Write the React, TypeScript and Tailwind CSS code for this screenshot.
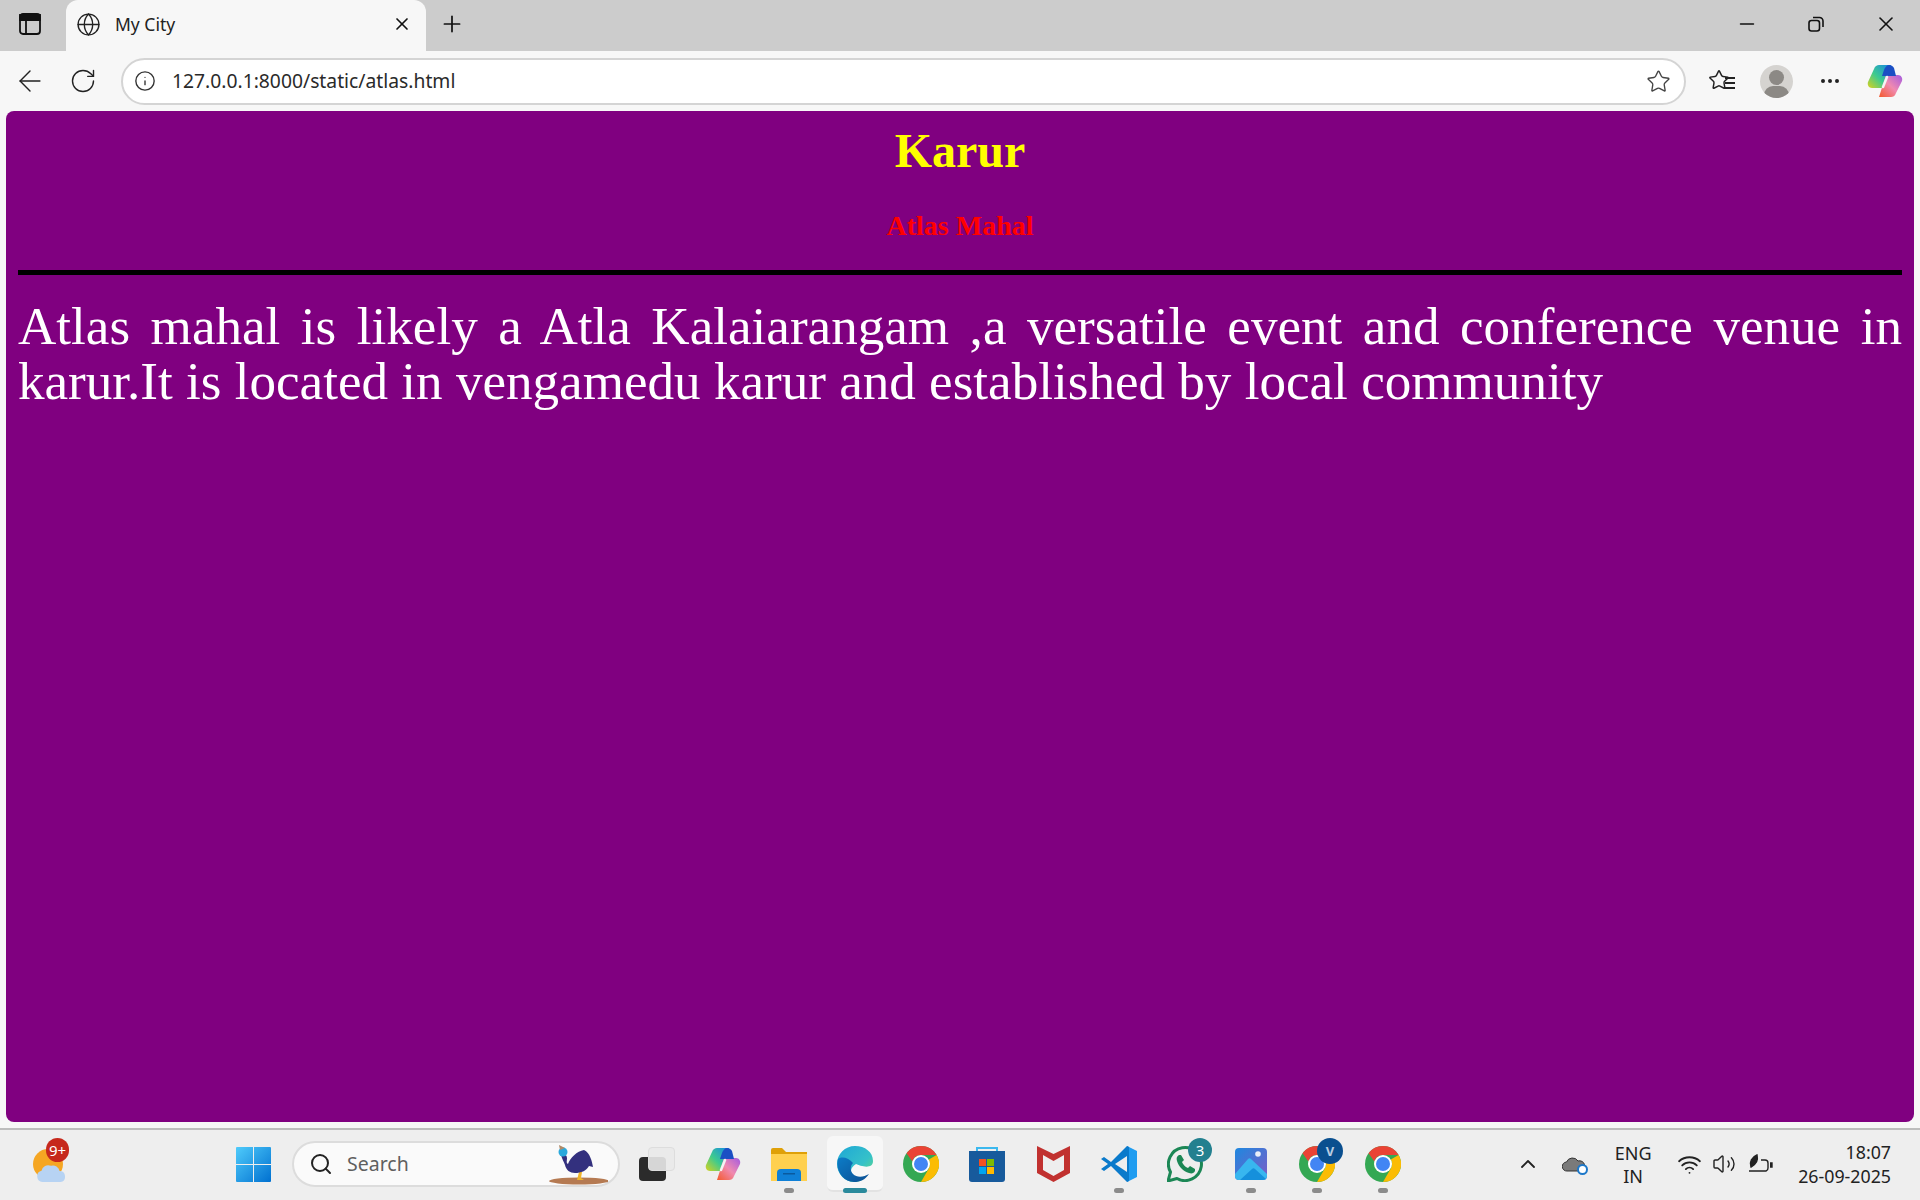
import React from 'react';
import { Globe, X, Plus, ArrowLeft, RotateCw, Info, Star, MoreHorizontal, Minus, ChevronUp, Wifi, Volume2, Search } from 'lucide-react';

const uiFont = "font-['Noto_Sans','Open_Sans',sans-serif]";

function ChromeIcon({ id }: { id: string }) {
  return (
    <svg width="36" height="36" viewBox="0 0 36 36">
      <circle cx="18" cy="18" r="18" fill="#34a853" />
      <path d="M18 0a18 18 0 0 1 15.6 9H18a9 9 0 0 0-8.6 6.4L3.5 7.2A18 18 0 0 1 18 0z" fill="#ea4335" />
      <path d="M33.6 9A18 18 0 0 1 18 36l7.8-13.5A9 9 0 0 0 25.8 13.500z" fill="#fbbc04" />
      <circle cx="18" cy="18" r="9" fill="#fff" />
      <circle id={id} cx="18" cy="18" r="7" fill="#4285f4" />
    </svg>
  );
}

function CopilotIcon({ size, id }: { size: number; id: string }) {
  return (
    <svg width={size} height={size} viewBox="0 0 36 36">
      <defs>
        <linearGradient id={id + 'a'} x1="0" y1="1" x2="1" y2="0">
          <stop offset="0" stopColor="#d8d21e" />
          <stop offset="0.45" stopColor="#3ecb8e" />
          <stop offset="1" stopColor="#1487e6" />
        </linearGradient>
        <linearGradient id={id + 'b'} x1="0" y1="1" x2="1" y2="0">
          <stop offset="0" stopColor="#f4592c" />
          <stop offset="0.5" stopColor="#f08ab0" />
          <stop offset="1" stopColor="#a55be0" />
        </linearGradient>
      </defs>
      <path d="M12 2H24L17 25H5C2 25 0 22 1 19L7 6C8 3 10 2 12 2z" fill={`url(#${id}a)`} />
      <path d="M24 34H12L19 12H31C34 12 36 15 35 18L29 30C28 33 26 34 24 34z" fill={`url(#${id}b)`} />
      <path d="M22 2C20 2 18 4 17 7L15 13H29L27 5C26 3 24 2 22 2z" fill="#1b4fc4" />
      <path d="M20 14L16 24" stroke="#f4f4f4" strokeWidth="2.500" strokeLinecap="round" />
    </svg>
  );
}

function EdgeIcon() {
  return (
    <svg width="36" height="36" viewBox="0 0 36 36">
      <defs>
        <linearGradient id="edge1" x1="0" y1="0" x2="1" y2="1">
          <stop offset="0" stopColor="#1ea7d6" />
          <stop offset="0.6" stopColor="#35c1c9" />
          <stop offset="1" stopColor="#6ee06a" />
        </linearGradient>
        <linearGradient id="edge2" x1="0" y1="0" x2="1" y2="1">
          <stop offset="0" stopColor="#0c7cc7" />
          <stop offset="1" stopColor="#0c4f93" />
        </linearGradient>
      </defs>
      <path d="M18 0C8 0 0 8 0 18c0 10 8 18 17 18 4 0 6-1 8-2-6 1-11-3-11-9 0-3 2-5 5-7 4 2 17 6 17-3C36 6 28 0 18 0z" fill="url(#edge1)" />
      <path d="M1 13C-2 24 6 36 17 36c6 0 11-2 15-8-5 3-12 4-16 0-3-3-3-8 0-11-4-5-11-7-15-4z" fill="url(#edge2)" />
    </svg>
  );
}

function FolderIcon() {
  return (
    <svg width="36" height="33" viewBox="0 0 36 33">
      <path d="M0 2a2 2 0 0 1 2-2h9l4 4h21v6H0z" fill="#dfa008" />
      <path d="M0 6h36v27H0z" fill="#ffd04f" />
      <rect x="6" y="22" width="24" height="11" rx="0" fill="#ffc532" />
      <path d="M6 33V25a4 4 0 0 1 4-4h16a4 4 0 0 1 4 4v8z" fill="#0f80d7" />
      <rect x="12" y="25" width="12" height="1.500" fill="#0a5a9e" />
    </svg>
  );
}

function StoreIcon() {
  return (
    <svg width="36" height="36" viewBox="0 0 36 36">
      <path d="M8 6V2h20v4" fill="none" stroke="#3bb8ee" strokeWidth="2" />
      <path d="M0 5h36v28a3 3 0 0 1-3 3H3a3 3 0 0 1-3-3z" fill="#175a9c" />
      <rect x="10" y="13" width="7" height="7" fill="#f25022" />
      <rect x="18" y="13" width="7" height="7" fill="#7fba00" />
      <rect x="10" y="21" width="7" height="7" fill="#00a4ef" />
      <rect x="18" y="21" width="7" height="7" fill="#ffb900" />
    </svg>
  );
}

function McAfeeIcon() {
  return (
    <svg width="33" height="36" viewBox="0 0 33 36">
      <path d="M0 0l16.500 8L33 0v27l-16.500 9L0 27z M6 9v15l10.500 6L27 24V9l-10.500 6z" fill="#c1312f" fillRule="evenodd" />
    </svg>
  );
}

function VSCodeIcon() {
  return (
    <svg width="36" height="36" viewBox="0 0 36 36">
      <path d="M26 0l10 5v26l-10 5z" fill="#1f9cf0" />
      <path d="M26 0L10 16 3 11l-3 2 7 5-7 5 3 2 7-5 16 16 2-1V1z" fill="#0a7acb" />
      <path d="M26 10v16L14 18z" fill="#eeeeee" />
    </svg>
  );
}

function WhatsAppIcon() {
  return (
    <svg width="36" height="36" viewBox="0 0 36 36">
      <path d="M1 35l2.500-9A16.500 16.500 0 1 1 10 32.500z" fill="none" stroke="#1b8755" strokeWidth="3" strokeLinejoin="round" />
      <path d="M12 9c-2 1-3 3-2 6 2 6 6 10 12 12 3 1 5 0 6-2l0-2-5-3-2 2c-3-1-5-4-6-6l2-2-3-5z" fill="#1b8755" />
    </svg>
  );
}

function PhotosIcon() {
  return (
    <svg width="32" height="32" viewBox="0 0 32 32">
      <defs>
        <linearGradient id="photos1" x1="0" y1="0" x2="1" y2="1">
          <stop offset="0" stopColor="#1e88df" />
          <stop offset="1" stopColor="#7d5cc6" />
        </linearGradient>
      </defs>
      <rect width="32" height="32" rx="4" fill="url(#photos1)" />
      <circle cx="23" cy="6" r="2.800" fill="#e9eef8" />
      <path d="M0 26L13 11c1-1 2-1 3 0l16 15v2a4 4 0 0 1-4 4H4a4 4 0 0 1-4-4z" fill="#38b6ef" />
      <path d="M5 32l12-11c1-1 2-1 3 0l11 10-3 1z" fill="#1590dc" />
    </svg>
  );
}

function WeatherIcon() {
  return (
    <div className="relative w-[36px] h-[44px]">
      <div className="absolute left-0 top-[11px] w-[30px] h-[30px] rounded-full bg-[#f5a623]" />
      <svg className="absolute left-[3px] top-[25px]" width="31" height="19" viewBox="0 0 31 20">
        <path d="M6 20a6 6 0 0 1-1-11.800A7 7 0 0 1 15 3a7 7 0 0 1 9 5.500A5.800 5.800 0 0 1 25 20z" fill="#b7d3f3" />
      </svg>
      <div className="absolute left-[13px] top-0 w-[23px] h-[24px] rounded-full bg-[#c6281c] text-white text-[15px] flex items-center justify-center leading-none">9+</div>
    </div>
  );
}

function BirdIcon() {
  return (
    <svg width="59" height="42" viewBox="0 0 59 42">
      <ellipse cx="30" cy="38" rx="30" ry="3.500" fill="#b57a52" />
      <path d="M28 37l2-8h3l-1 6 3 2z" fill="#f0b429" />
      <path d="M12 12c3-2 6 0 6 3s-1 5 1 6c2-6 9-13 16-14 6 3 8 11 9 17l-4-1c-3 5-8 7-14 7-5 0-9-3-10-8-1-3-3-6-4-10z" fill="#33307e" />
      <circle cx="14" cy="9" r="4.500" fill="#2aa9dc" />
      <path d="M10 2l6 3-5 2z" fill="#b08a68" />
    </svg>
  );
}

// one 66px wide taskbar slot
function Slot({ children, pip, active }: { children: React.ReactNode; pip?: boolean; active?: boolean }) {
  return (
    <div className="relative w-[66px] h-[56px] flex items-center justify-center shrink-0">
      {active && <div className="absolute left-[5px] top-0 w-[56px] h-[56px] rounded-md bg-[#f7f7f7] border-b-2 border-[#e2e2e2]" />}
      <div className="relative flex items-center justify-center">
        {children}
      </div>
      {pip && <div className="absolute bottom-[-1px] w-[10px] h-[5px] rounded-full bg-[#8b8b8b]" />}
      {active && <div className="absolute bottom-[-1px] w-[24px] h-[5px] rounded-full bg-[#2a8a9c]" />}
    </div>
  );
}

export default function App() {
  return (
    <div className={`w-[1920px] h-[1200px] flex flex-col overflow-hidden bg-[#f7f7f7] ${uiFont}`}>

      {/* tab strip */}
      <div className="h-[51px] bg-[#cccccc] flex items-stretch shrink-0">
        <div className="w-[66px] flex items-center justify-center pr-[6px] pb-[3px]">
          <svg width="22" height="22" viewBox="0 0 22 22" fill="none" stroke="#111" strokeWidth="1.800">
            <rect x="1" y="1" width="20" height="20" rx="3" />
            <path d="M1 2h20v5H1z" fill="#111" />
            <path d="M7 7v14" />
          </svg>
        </div>
        <div className="w-[360px] bg-[#f7f7f7] rounded-t-xl flex items-center pl-[10px] pr-[14px] pb-[3px]">
          <Globe size={25} strokeWidth={1.3} className="text-[#222]" />
          <span className="ml-[14px] text-[17.500px] text-[#222]">My City</span>
          <X size={20} strokeWidth={2} className="ml-auto text-[#111]" />
        </div>
        <div className="ml-[13px] flex items-center pb-[3px]">
          <Plus size={26} strokeWidth={1.6} className="text-[#111]" />
        </div>
        <div className="ml-auto flex items-center pb-[3px]">
          <Minus size={22} strokeWidth={1.8} className="text-[#111] mr-[50px]" />
          <svg width="16" height="16" viewBox="0 0 16 16" fill="none" stroke="#111" strokeWidth="1.600" className="mr-[50px]">
            <rect x="1" y="4.500" width="10.500" height="10.500" rx="2.500" />
            <path d="M5 1.500h6.500A3.500 3.500 0 0 1 15 5v6" />
          </svg>
          <X size={24} strokeWidth={1.6} className="text-[#111] mr-[22px]" />
        </div>
      </div>

      {/* address bar */}
      <div className="h-[60px] flex items-center shrink-0">
        <div className="w-[121px] flex items-center pl-[13px] gap-[22px]">
          <ArrowLeft size={34} strokeWidth={1} className="text-[#222]" />
          <RotateCw size={28} strokeWidth={1.2} className="text-[#222]" />
        </div>
        <div className="w-[1565px] h-[47px] rounded-full border-2 border-[#d4d4d4] bg-white flex items-center pl-[11px] pr-[13px]">
          <Info size={22} strokeWidth={1.5} className="text-[#333]" />
          <span className="ml-[16px] text-[19.300px] text-[#2a2a2a]">127.0.0.1:8000/static/atlas.html</span>
          <Star size={25} strokeWidth={1.3} className="ml-auto text-[#444]" />
        </div>
        <div className="flex items-center ml-[22px]">
          <div className="relative w-[27px] h-[25px]">
            <Star size={22} strokeWidth={1.6} className="text-[#222]" />
            <div className="absolute right-0 top-[8px] w-[10px] flex flex-col gap-[3px]">
              <div className="h-[2px] bg-[#222]" />
              <div className="h-[2px] bg-[#222]" />
              <div className="h-[2px] bg-[#222]" />
            </div>
          </div>
          <div className="relative ml-[25px] w-[33px] h-[33px] rounded-full bg-[#d5d3d0] overflow-hidden">
            <div className="absolute left-[9px] top-[5px] w-[15px] h-[15px] rounded-full bg-[#8c8985]" />
            <div className="absolute left-[4px] top-[21px] w-[25px] h-[18px] rounded-full bg-[#8c8985]" />
          </div>
          <MoreHorizontal size={24} strokeWidth={2} className="ml-[25px] text-[#222]" />
          <div className="ml-[25px]">
            <CopilotIcon size={36} id="cop1" />
          </div>
        </div>
      </div>

      {/* page */}
      <main className="h-[1011px] mx-[6px] rounded-lg bg-[#800080] px-[12px] shrink-0 font-['Liberation_Serif',serif]">
        <h1 className="pt-[12px] text-center text-[48px] leading-[55px] font-bold text-[#ffff00]">Karur</h1>
        <h2 className="mt-[32px] text-center text-[28px] leading-[32px] font-bold text-[#ff0000]">Atlas Mahal</h2>
        <div className="mt-[28px] h-[5px] bg-black" />
        <p className="mt-[24px] text-[53.100px] leading-[55px] text-white text-justify">
          Atlas mahal is likely a Atla Kalaiarangam ,a versatile event and conference venue in karur.It is located in vengamedu karur and established by local community
        </p>
      </main>

      {/* taskbar */}
      <div className="mt-[6px] flex-1 bg-[#eeeeee] border-t-2 border-[#bdbdbd] flex items-center pb-[2px]">
        <div className="ml-[33px] w-[36px] -mt-[8px]">
          <WeatherIcon />
        </div>
        <svg className="ml-[167px]" width="35" height="35" viewBox="0 0 35 35">
          <defs>
            <linearGradient id="win1" x1="0" y1="0" x2="1" y2="1">
              <stop offset="0" stopColor="#4fcbfb" />
              <stop offset="1" stopColor="#0070d0" />
            </linearGradient>
          </defs>
          <path d="M0 1a1 1 0 0 1 1-1h16v17H0zM18 0h16a1 1 0 0 1 1 1v16H18zM0 18h17v17H1a1 1 0 0 1-1-1zM18 18h17v16a1 1 0 0 1-1 1H18z" fill="url(#win1)" />
        </svg>
        <div className="ml-[21px] w-[328px] h-[46px] rounded-full bg-[#fafafa] border-2 border-[#dcdcdc] flex items-center pl-[15px] pr-[10px]">
          <Search size={24} strokeWidth={2} className="text-[#222]" />
          <span className="ml-[14px] text-[19.500px] text-[#5f5f5f]">Search</span>
          <div className="ml-auto">
            <BirdIcon />
          </div>
        </div>
        <div className="ml-[4px] flex">
          <Slot>
            <div className="relative w-[36px] h-[34px]">
              <div className="absolute left-0 bottom-0 w-[27px] h-[24px] rounded-sm bg-[#2b2b2b]" />
              <div className="absolute right-0 top-0 w-[27px] h-[24px] rounded-sm bg-[#e9e9e9]/90 border border-[#dddddd]" />
            </div>
          </Slot>
          <Slot><CopilotIcon size={36} id="cop2" /></Slot>
          <Slot pip><FolderIcon /></Slot>
          <Slot active><EdgeIcon /></Slot>
          <Slot><ChromeIcon id="chrome1" /></Slot>
          <Slot><StoreIcon /></Slot>
          <Slot><McAfeeIcon /></Slot>
          <Slot pip><VSCodeIcon /></Slot>
          <Slot>
            <WhatsAppIcon />
            <div className="absolute right-[-9px] top-[-8px] w-[24px] h-[24px] rounded-full bg-[#23808f] text-white text-[15px] flex items-center justify-center leading-none">3</div>
          </Slot>
          <Slot pip><PhotosIcon /></Slot>
          <Slot pip>
            <ChromeIcon id="chrome2" />
            <div className="absolute right-[-8px] top-[-8px] w-[26px] h-[26px] rounded-full bg-[#0a4f8f] text-[#b9cde2] text-[13px] font-bold flex items-center justify-center leading-none">V</div>
          </Slot>
          <Slot pip><ChromeIcon id="chrome3" /></Slot>
        </div>

        <div className="ml-auto flex items-center text-[#222]">
          <ChevronUp size={24} strokeWidth={1.8} />
          <div className="relative ml-[22px] w-[24px] h-[16px]">
            <svg width="24" height="16" viewBox="0 0 24 16">
              <path d="M5 15a4.500 4.500 0 0 1-.5-9A6.500 6.500 0 0 1 16 5a5 5 0 0 1 3 10z" fill="#7a7a7a" stroke="#333" strokeWidth="1" />
            </svg>
            <div className="absolute right-[-2px] bottom-[-3px] w-[11px] h-[11px] rounded-full bg-white border-2 border-[#1d78c9]" />
          </div>
          <div className="ml-[24px] w-[46px] text-center text-[18px] leading-[23px] mt-[1px]">
            <div>ENG</div>
            <div>IN</div>
          </div>
          <Wifi size={25} strokeWidth={1.8} className="ml-[21px]" />
          <Volume2 size={24} strokeWidth={1.4} className="ml-[10px]" />
          <svg className="ml-[12px]" width="25" height="20" viewBox="0 0 25 20" fill="none" stroke="#222" strokeWidth="1.400">
            <path d="M1 17h17a3 3 0 0 0 2-3V9a3 3 0 0 0-3-3h-4" />
            <path d="M22 9h2v4h-2" fill="#222" />
            <path d="M3 13C1 8 4 3 9 1c1 4 0 9-6 12z" fill="#222" />
          </svg>
          <div className="ml-[25px] mr-[29px] text-right text-[17.800px] leading-[24px]">
            <div>18:07</div>
            <div>26-09-2025</div>
          </div>
        </div>
      </div>
    </div>
  );
}
